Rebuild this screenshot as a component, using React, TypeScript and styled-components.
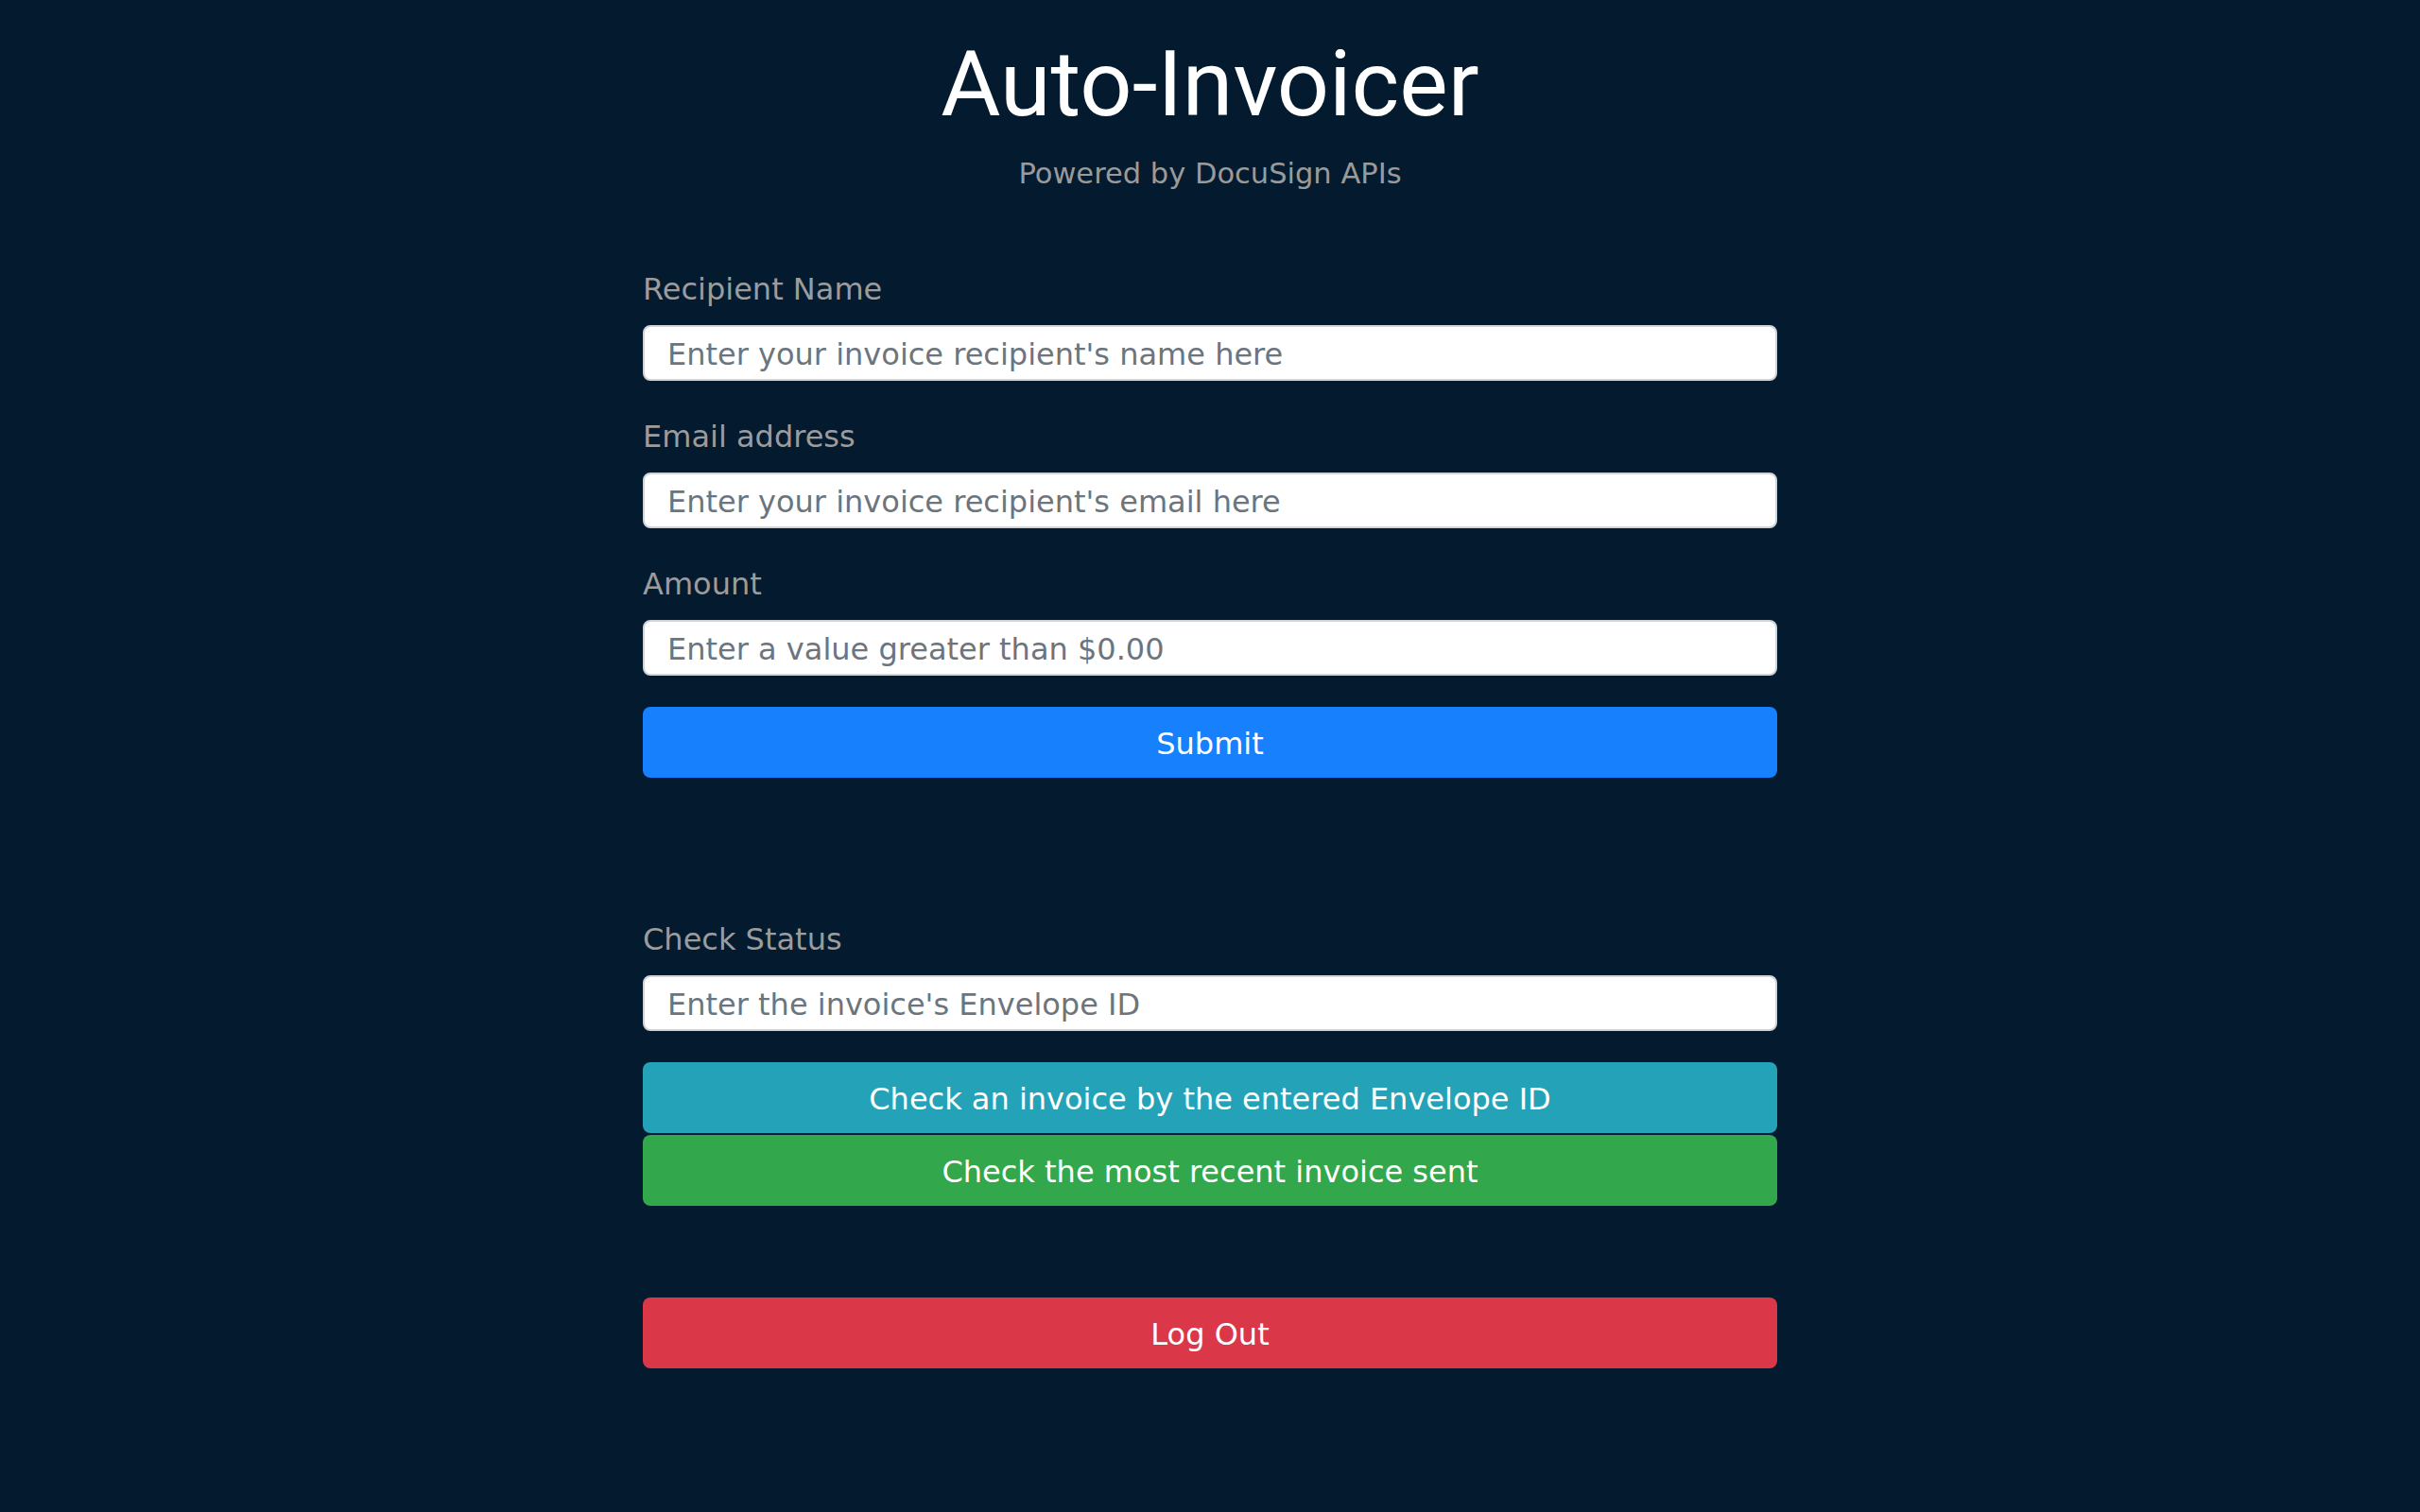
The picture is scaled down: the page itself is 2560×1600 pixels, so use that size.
import React from "react";
import styled, { createGlobalStyle } from "styled-components";

const GlobalStyle = createGlobalStyle`
  html, body {
    margin: 0;
    padding: 0;
    background: #041a2f;
  }
  body {
    font-family: "DejaVu Sans", Verdana, sans-serif;
  }
  *, *::before, *::after {
    box-sizing: border-box;
  }
`;

const Page = styled.main`
  min-height: 100vh;
  background: #041a2f;
  display: flex;
  flex-direction: column;
  align-items: center;
  padding-top: 30px;
`;

const Header = styled.header`
  display: flex;
  flex-direction: column;
  align-items: center;
`;

const Title = styled.h1`
  margin: 0;
  font-family: Roboto, "Liberation Sans", sans-serif;
  font-weight: 400;
  font-size: 97px;
  line-height: 118px;
  color: #ffffff;
`;

const Subtitle = styled.p`
  margin: 13px 0 0;
  font-size: 30.5px;
  line-height: 45px;
  color: #9a9a9a;
`;

const Section = styled.form<{ $top: number }>`
  width: 1200px;
  display: flex;
  flex-direction: column;
  margin-top: ${(p) => p.$top}px;
`;

const Field = styled.div<{ $gap?: number }>`
  display: flex;
  flex-direction: column;
  margin-top: ${(p) => p.$gap ?? 0}px;
`;

const Label = styled.label`
  font-size: 32px;
  line-height: 48px;
  color: #9c9c9c;
  margin-bottom: 14px;
`;

const Input = styled.input`
  width: 100%;
  height: 59px;
  padding: 2px 24px 0;
  border: 2px solid #ced4da;
  border-radius: 8px;
  background: #ffffff;
  font-family: "DejaVu Sans", Verdana, sans-serif;
  font-size: 32px;
  color: #495057;
  outline: none;
  &::placeholder {
    color: #6c757d;
    opacity: 1;
  }
`;

const Button = styled.button<{ $bg: string; $gap?: number }>`
  width: 100%;
  height: 75px;
  margin-top: ${(p) => p.$gap ?? 0}px;
  padding: 2px 0 0;
  border: none;
  border-radius: 8px;
  background: ${(p) => p.$bg};
  color: #ffffff;
  font-family: "DejaVu Sans", Verdana, sans-serif;
  font-size: 32px;
  line-height: 1.5;
  display: flex;
  align-items: center;
  justify-content: center;
  cursor: pointer;
`;

export default function App() {
  return (
    <>
      <GlobalStyle />
      <Page>
        <Header>
          <Title>Auto-Invoicer</Title>
          <Subtitle>Powered by DocuSign APIs</Subtitle>
        </Header>

        <Section $top={76} onSubmit={(e) => e.preventDefault()}>
          <Field>
            <Label>Recipient Name</Label>
            <Input placeholder="Enter your invoice recipient's name here" />
          </Field>
          <Field $gap={35}>
            <Label>Email address</Label>
            <Input placeholder="Enter your invoice recipient's email here" />
          </Field>
          <Field $gap={35}>
            <Label>Amount</Label>
            <Input placeholder="Enter a value greater than $0.00" />
          </Field>
          <Button type="submit" $bg="#1780fd" $gap={33}>
            Submit
          </Button>
        </Section>

        <Section $top={147} onSubmit={(e) => e.preventDefault()}>
          <Field>
            <Label>Check Status</Label>
            <Input placeholder="Enter the invoice's Envelope ID" />
          </Field>
          <Button type="button" $bg="#24a3b8" $gap={33}>
            Check an invoice by the entered Envelope ID
          </Button>
          <Button type="button" $bg="#32a74c" $gap={2}>
            Check the most recent invoice sent
          </Button>
          <Button type="button" $bg="#da3749" $gap={97}>
            Log Out
          </Button>
        </Section>
      </Page>
    </>
  );
}
